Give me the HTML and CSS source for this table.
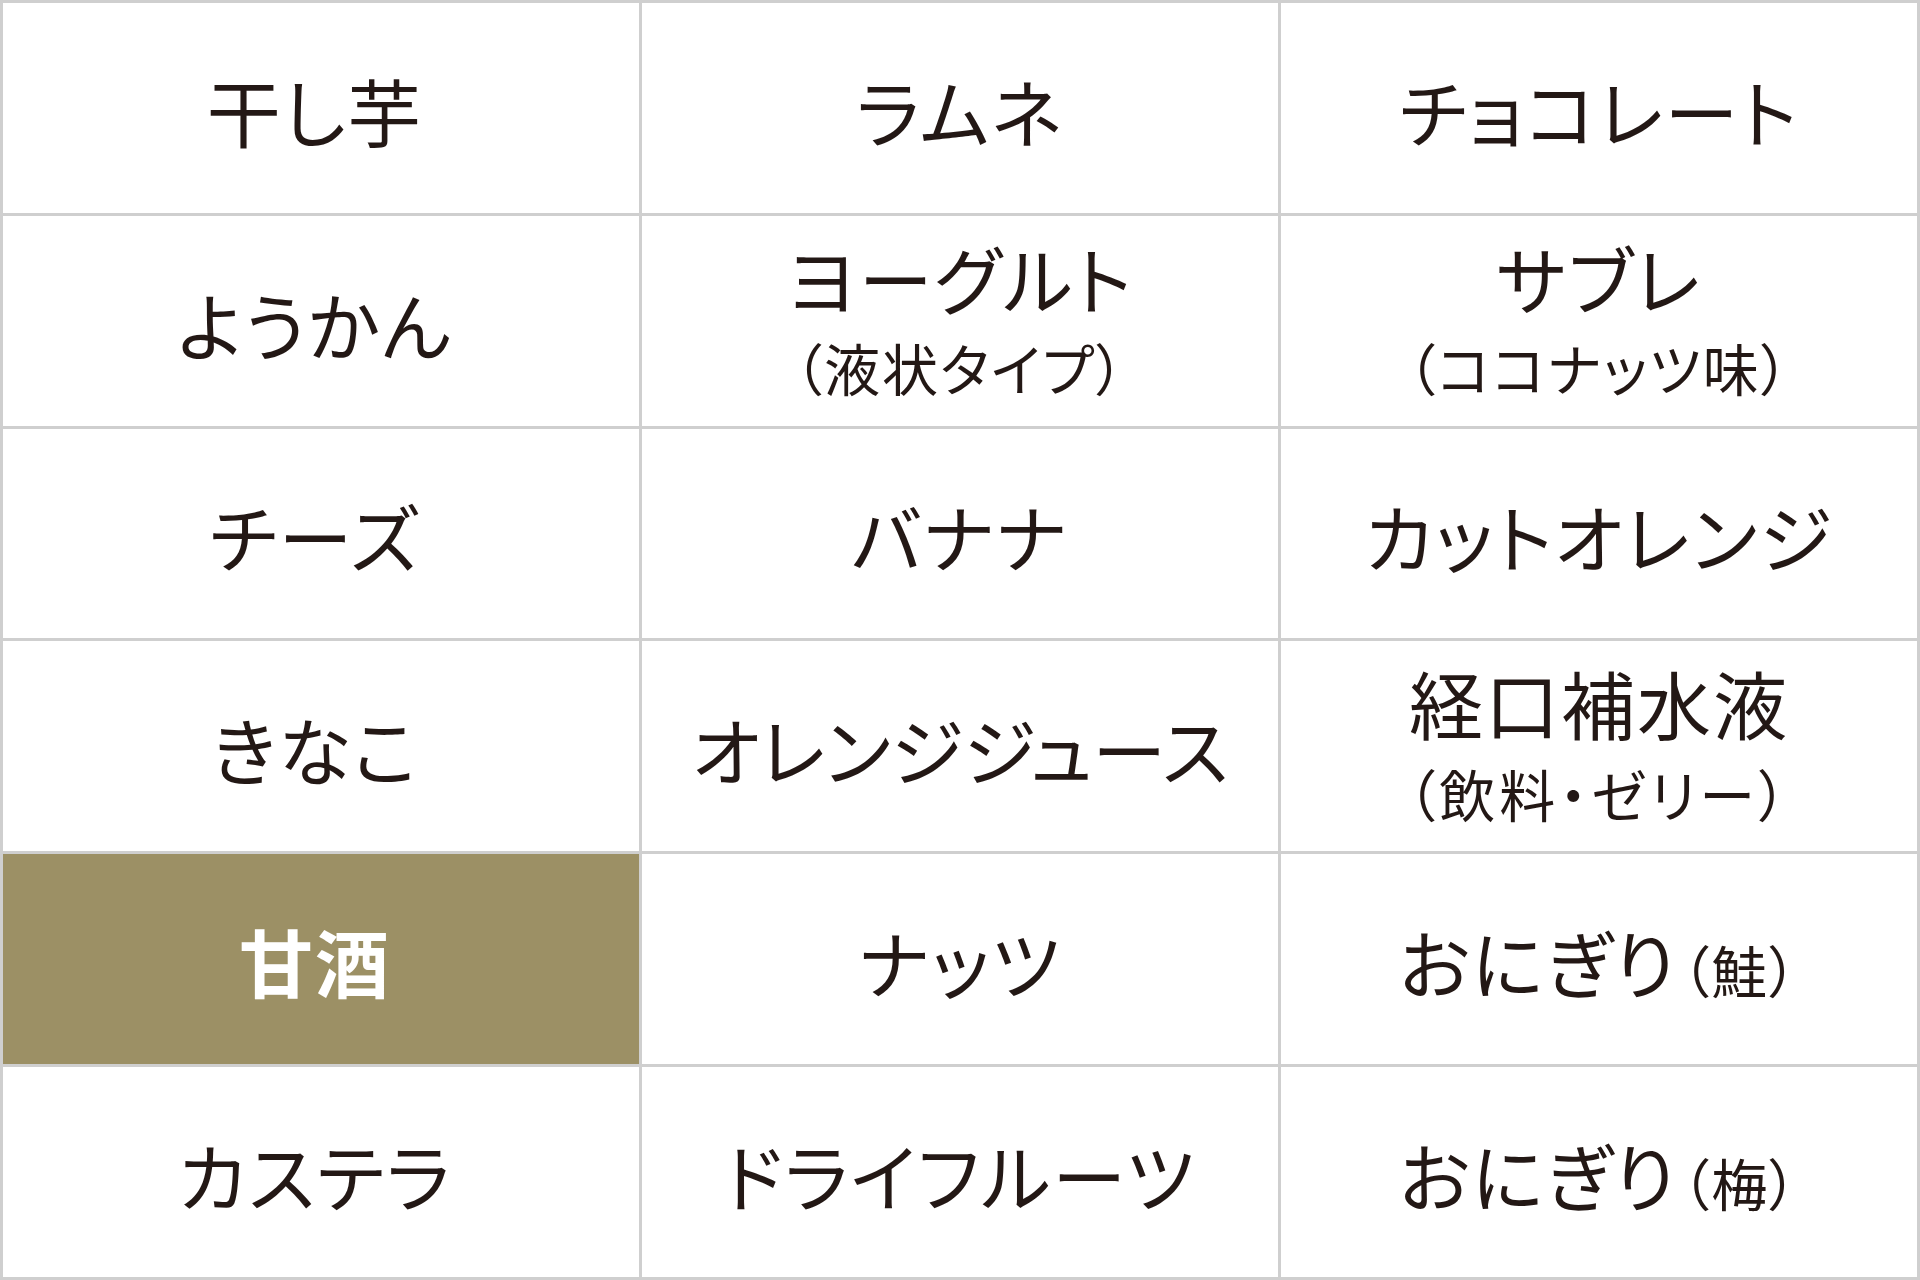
FILE: index.html
```html
<!DOCTYPE html>
<html lang="ja">
<head>
<meta charset="utf-8">
<title>食品一覧</title>
<link rel="stylesheet" href="styles.css">
</head>
<body>
<div class="grid">
  <div class="cell c1"><span class="main">干し芋</span></div>
  <div class="cell"><span class="main">ラムネ</span></div>
  <div class="cell"><span class="main">チョコレート</span></div>

  <div class="cell c1"><span class="main">ようかん</span></div>
  <div class="cell two"><span class="main">ヨーグルト</span><span class="sub">（液状タイプ）</span></div>
  <div class="cell two"><span class="main">サブレ</span><span class="sub">（ココナッツ味）</span></div>

  <div class="cell c1"><span class="main">チーズ</span></div>
  <div class="cell"><span class="main">バナナ</span></div>
  <div class="cell"><span class="main">カットオレンジ</span></div>

  <div class="cell c1"><span class="main">きなこ</span></div>
  <div class="cell"><span class="main tight">オレンジジュース</span></div>
  <div class="cell two"><span class="main">経口補水液</span><span class="sub wide">（飲料・ゼリー）</span></div>

  <div class="cell c1 hl"><span class="main">甘酒</span></div>
  <div class="cell"><span class="main">ナッツ</span></div>
  <div class="cell"><span class="main">おにぎり<span class="paren">（鮭）</span></span></div>

  <div class="cell c1"><span class="main">カステラ</span></div>
  <div class="cell"><span class="main">ドライフルーツ</span></div>
  <div class="cell"><span class="main">おにぎり<span class="paren">（梅）</span></span></div>
</div>
</body>
</html>
```
FILE: styles.css
```css
html, body {
  margin: 0;
  padding: 0;
  background: #ffffff;
}
body {
  font-family: "Noto Sans CJK JP", "Noto Sans", sans-serif;
  color: #231815;
}
.grid {
  box-sizing: border-box;
  width: 1920px;
  height: 1280px;
  display: grid;
  grid-template-columns: repeat(3, 1fr);
  grid-template-rows: repeat(6, 1fr);
  gap: 3px;
  padding: 3px;
  background: #cfcfcf;
}
.cell {
  background: #ffffff;
  display: flex;
  flex-direction: column;
  align-items: center;
  justify-content: center;
  padding-top: 4px;
  box-sizing: border-box;
}
.cell.c1 {
  padding-right: 12px;
}
.cell.two {
  padding-top: 0;
  padding-bottom: 4px;
}
.main {
  font-size: 74px;
  line-height: 1.3;
  font-weight: 400;
  white-space: nowrap;
  font-feature-settings: "palt";
  letter-spacing: 2px;
}
.main.tight {
  letter-spacing: 0;
}
.sub {
  font-size: 56px;
  line-height: 1.5;
  white-space: nowrap;
  font-feature-settings: "palt";
  letter-spacing: 2px;
}
.sub.wide {
  letter-spacing: 4px;
}
.paren {
  font-size: 56px;
  letter-spacing: 2px;
  margin-left: 4px;
}
.hl {
  background: #9c9065;
  color: #ffffff;
  padding-top: 2px;
}
.hl .main {
  font-weight: 700;
}
```
